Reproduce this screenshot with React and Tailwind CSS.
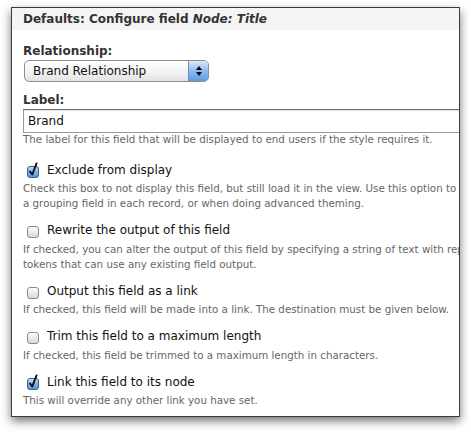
import React from 'react';

const options = [
  {
    label: 'Exclude from display',
    checked: true,
    desc: [
      'Check this box to not display this field, but still load it in the view. Use this option to',
      'a grouping field in each record, or when doing advanced theming.',
    ],
  },
  {
    label: 'Rewrite the output of this field',
    checked: false,
    desc: [
      'If checked, you can alter the output of this field by specifying a string of text with replacement',
      'tokens that can use any existing field output.',
    ],
  },
  {
    label: 'Output this field as a link',
    checked: false,
    desc: ['If checked, this field will be made into a link. The destination must be given below.'],
  },
  {
    label: 'Trim this field to a maximum length',
    checked: false,
    desc: ['If checked, this field be trimmed to a maximum length in characters.'],
  },
  {
    label: 'Link this field to its node',
    checked: true,
    desc: ['This will override any other link you have set.'],
  },
];

const Checkbox = ({ checked }) => (
  <svg width="14" height="16" viewBox="0 0 14 16" className="shrink-0">
    <defs>
      <linearGradient id="cbOff" x1="0" y1="0" x2="0" y2="1">
        <stop offset="0" stopColor="#ffffff" />
        <stop offset="1" stopColor="#d6d6d6" />
      </linearGradient>
      <linearGradient id="cbOn" x1="0" y1="0" x2="0" y2="1">
        <stop offset="0" stopColor="#cfe3fa" />
        <stop offset="0.5" stopColor="#7fb2ea" />
        <stop offset="1" stopColor="#4f93e0" />
      </linearGradient>
    </defs>
    <rect
      x="1.5"
      y="4.5"
      width="11"
      height="11"
      rx="2.5"
      fill={checked ? 'url(#cbOn)' : 'url(#cbOff)'}
      stroke={checked ? '#3b5f8f' : '#8a8a8a'}
    />
    {checked && (
      <path d="M4 9.5 L6.3 12.5 L10.5 1.5" fill="none" stroke="#111" strokeWidth="2" strokeLinecap="round" strokeLinejoin="round" />
    )}
  </svg>
);

const App = () => {
  return (
    <div className="w-[471px] h-[432px] bg-white pt-[7px] pl-[11px] font-['DejaVu_Sans',Verdana,sans-serif]">
      <div className="w-[449px] h-[410px] bg-white border border-[#3c3c3c] overflow-hidden shadow-[0_4px_9px_rgba(0,0,0,0.55)]">
        <div className="h-[22px] bg-[#f4f4f4] px-[11px] flex items-center text-[12px] font-bold text-[#333] whitespace-nowrap">
          Defaults: Configure field&nbsp;<i>Node: Title</i>
        </div>
        <div className="pl-[11px] pt-[12px] text-[#222]">
          <div className="text-[12px] font-bold leading-[18px] text-[#333]">Relationship:</div>
          <div className="ml-[1px] w-[185px] h-[22px] rounded-[5px] border border-[#8e8e8e] flex overflow-hidden bg-gradient-to-b from-white via-[#f4f4f4] to-[#e2e2e2]">
            <div className="flex-1 pl-[8px] flex items-center text-[12px] text-[#111]">Brand Relationship</div>
            <div className="w-[20px] border-l border-[#6b8fc4] bg-gradient-to-b from-[#dbe9fb] via-[#8cbaf0] to-[#5c9ae6] flex flex-col items-center justify-center gap-[2px]">
              <span className="w-0 h-0 border-x-[3px] border-x-transparent border-b-[4px] border-b-black" />
              <span className="w-0 h-0 border-x-[3px] border-x-transparent border-t-[4px] border-t-black" />
            </div>
          </div>
          <div className="mt-[9px] text-[12px] font-bold leading-[18px] text-[#333]">Label:</div>
          <div className="h-[24px] -mr-[4px] border border-[#9a9a9a] border-t-[#6e6e6e] flex items-center pl-[4px] text-[12px] text-[#111] shadow-[inset_0_1px_1px_rgba(0,0,0,0.12)]">
            Brand
          </div>
          <div className="text-[10.3px] leading-[13px] text-[#666] whitespace-nowrap">
            The label for this field that will be displayed to end users if the style requires it.
          </div>
          <div className="mt-[12px] flex flex-col">
            {options.map(opt => (
              <div key={opt.label} className="mb-[7.5px]">
                <div className="flex items-center h-[23px] pl-[3px] gap-[7px]">
                  <Checkbox checked={opt.checked} />
                  <span className="text-[12px] text-[#111]">{opt.label}</span>
                </div>
                <div className="text-[10.3px] leading-[15px] text-[#666] whitespace-nowrap">
                  {opt.desc.map(line => (
                    <div key={line}>{line}</div>
                  ))}
                </div>
              </div>
            ))}
          </div>
        </div>
      </div>
    </div>
  );
};

export default App;
